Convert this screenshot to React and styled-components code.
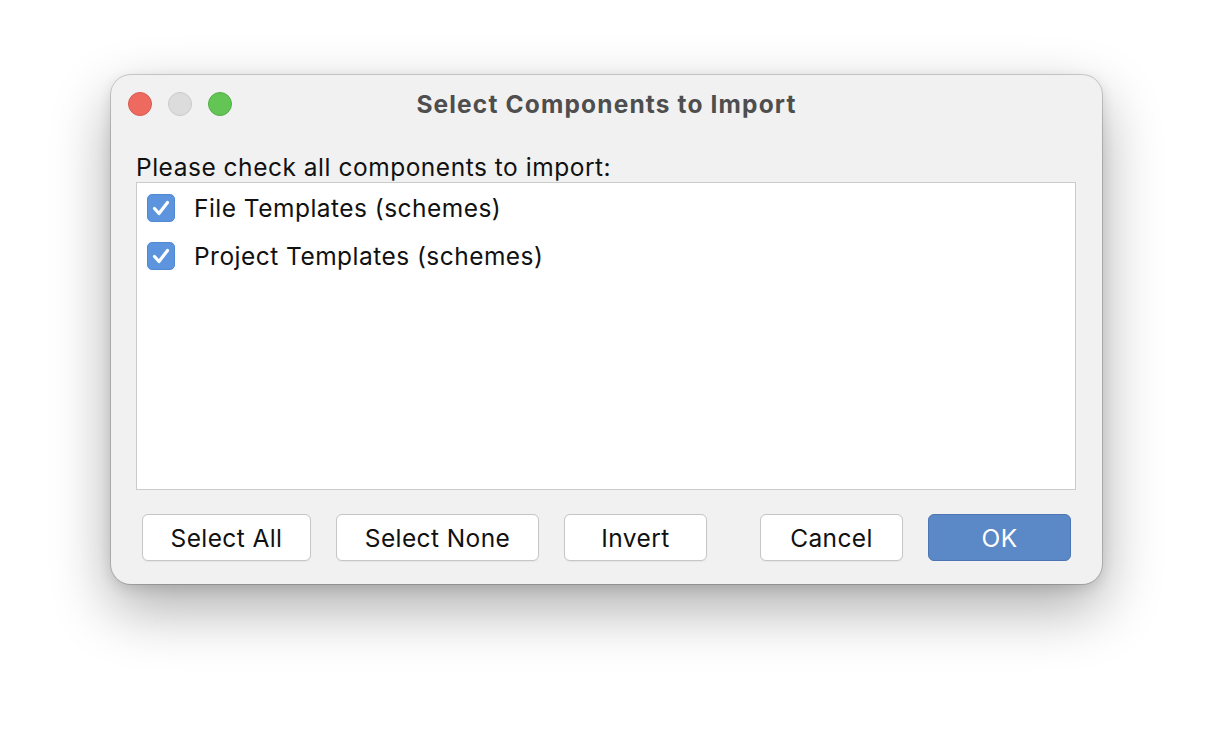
import React, { useState } from "react";
import styled, { createGlobalStyle } from "styled-components";

const Global = createGlobalStyle`
  html, body { margin: 0; padding: 0; background: #ffffff; }
  body { font-family: "Inter", "Liberation Sans", Arial, sans-serif; -webkit-font-smoothing: antialiased; }
`;

const Page = styled.div`
  width: 1214px;
  height: 732px;
  box-sizing: border-box;
  padding: 75px 0 0 111px;
  background: #ffffff;
`;

const Window = styled.div`
  width: 991px;
  height: 509px;
  box-sizing: border-box;
  background: #f1f1f1;
  border-radius: 20px;
  box-shadow: 0 0 0 1px rgba(0, 0, 0, 0.16), 0 24px 60px rgba(0, 0, 0, 0.33),
    0 4px 14px rgba(0, 0, 0, 0.12);
  display: flex;
  flex-direction: column;
  overflow: hidden;
`;

const TitleBar = styled.div`
  height: 57px;
  display: flex;
  align-items: center;
  position: relative;
  padding: 0 0 0 17px;
  flex-shrink: 0;
`;

const Lights = styled.div`
  display: flex;
  gap: 16px;
  position: relative;
  z-index: 1;
  margin-top: 1px;
`;

const Light = styled.span`
  width: 24px;
  height: 24px;
  border-radius: 50%;
  box-sizing: border-box;
  background: ${(p) => p.$bg};
  border: 1px solid ${(p) => p.$bd};
`;

const Title = styled.div`
  position: absolute;
  inset: 0;
  display: flex;
  align-items: center;
  justify-content: center;
  font-weight: 700;
  font-size: 24.5px;
  letter-spacing: 1.15px;
  color: #4e4e4e;
`;

const Body = styled.div`
  flex: 1;
  display: flex;
  flex-direction: column;
  padding: 0 26px 23px 25px;
`;

const PromptRow = styled.div`
  height: 50px;
  display: flex;
  align-items: flex-end;
  padding-bottom: 1px;
  box-sizing: border-box;
`;

const Prompt = styled.div`
  font-size: 24.5px;
  letter-spacing: 0.52px;
  color: #111111;
  line-height: 28px;
`;

const List = styled.div`
  height: 308px;
  box-sizing: border-box;
  background: #ffffff;
  border: 1px solid #cbcbcb;
  padding: 11px 10px;
  display: flex;
  flex-direction: column;
  gap: 20px;
`;

const Item = styled.label`
  display: flex;
  align-items: center;
  gap: 19px;
  height: 28px;
  font-size: 24.5px;
  letter-spacing: 0.47px;
  color: #111111;
  cursor: default;
`;

const Box = styled.span`
  width: 28px;
  height: 28px;
  border-radius: 5px;
  background: ${(p) => (p.$on ? "#5c95dd" : "#ffffff")};
  border: 1px solid ${(p) => (p.$on ? "#5089d3" : "#b8b8b8")};
  box-sizing: border-box;
  display: flex;
  align-items: center;
  justify-content: center;
  flex-shrink: 0;
`;

const Buttons = styled.div`
  display: flex;
  align-items: center;
  margin-top: 24px;
  padding: 0 5px 0 6px;
  gap: 25px;
`;

const Spacer = styled.div`
  flex: 1;
`;

const Button = styled.button`
  width: ${(p) => p.$w}px;
  height: 47px;
  box-sizing: border-box;
  border-radius: 6px;
  font-family: "Inter", "Liberation Sans", Arial, sans-serif;
  font-size: 24.5px;
  letter-spacing: 0.4px;
  padding: 0;
  background: ${(p) => (p.$primary ? "#5b88c6" : "#ffffff")};
  color: ${(p) => (p.$primary ? "#ffffff" : "#111111")};
  border: 1.5px solid ${(p) => (p.$primary ? "#4b75b3" : "#c6c6c6")};
  box-shadow: ${(p) => (p.$primary ? "none" : "0 0.5px 1px rgba(0,0,0,0.05)")};
`;

function Check() {
  return (
    <svg width="24" height="24" viewBox="0 0 24 24">
      <path
        d="M5.5 12.5 L10 17.5 L18.5 6.5"
        fill="none"
        stroke="#ffffff"
        strokeWidth="3.2"
        strokeLinecap="round"
        strokeLinejoin="round"
      />
    </svg>
  );
}

export default function App() {
  const [items, setItems] = useState([
    { name: "File Templates (schemes)", on: true },
    { name: "Project Templates (schemes)", on: true },
  ]);
  const toggle = (i) =>
    setItems((arr) => arr.map((it, j) => (j === i ? { ...it, on: !it.on } : it)));
  return (
    <Page>
      <Global />
      <Window>
        <TitleBar>
          <Lights>
            <Light $bg="#ee6a5f" $bd="#d65a50" />
            <Light $bg="#dcdcdc" $bd="#c9c9c9" />
            <Light $bg="#62c554" $bd="#53ad47" />
          </Lights>
          <Title>Select Components to Import</Title>
        </TitleBar>
        <Body>
          <PromptRow>
            <Prompt>Please check all components to import:</Prompt>
          </PromptRow>
          <List>
            {items.map((it, i) => (
              <Item key={it.name} onClick={() => toggle(i)}>
                <Box $on={it.on}>{it.on && <Check />}</Box>
                {it.name}
              </Item>
            ))}
          </List>
          <Buttons>
            <Button $w={169}>Select All</Button>
            <Button $w={203}>Select None</Button>
            <Button $w={143}>Invert</Button>
            <Spacer />
            <Button $w={143}>Cancel</Button>
            <Button $w={143} $primary>
              OK
            </Button>
          </Buttons>
        </Body>
      </Window>
    </Page>
  );
}
